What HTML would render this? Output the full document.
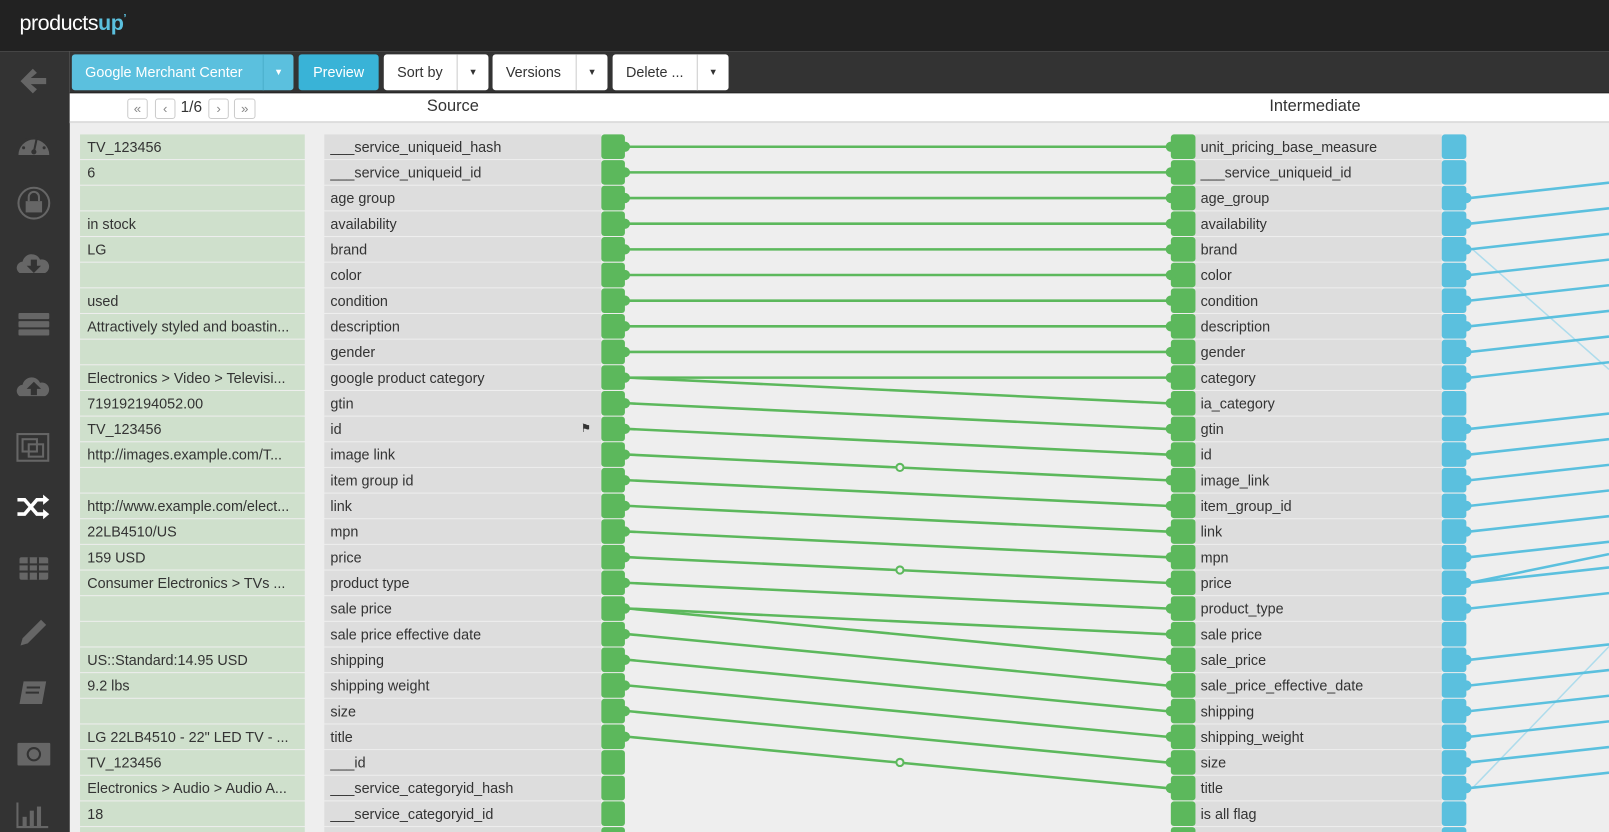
<!DOCTYPE html>
<html><head><meta charset="utf-8"><style>
*{margin:0;padding:0;box-sizing:border-box}
body{width:1609px;height:832px;overflow:hidden;background:#eee;font-family:"Liberation Sans",Arial,sans-serif}
#wrap{position:absolute;left:0;top:0;width:1568px;height:811px;transform:scale(1.02615);transform-origin:0 0;overflow:hidden;background:#eee}
#top{position:absolute;left:0;top:0;width:1568px;height:50px;background:#222}
#logo{position:absolute;left:19px;top:11px;color:#fff;font-size:21px;letter-spacing:-0.5px}
#logo span{color:#5bc0de;font-weight:bold}
#side{position:absolute;left:0;top:50px;width:68px;height:782px;background:#333}
#tb{position:absolute;left:68px;top:50px;width:1500px;height:41px;background:#333;border-bottom:1px solid #222}
.btn{position:absolute;top:53px;height:35px;border-radius:3px;font-size:14px;line-height:35px;color:#333;background:#fff}
#hdr{position:absolute;left:68px;top:91px;width:1500px;height:29px;background:#fff;border-bottom:2px solid #ddd}
.pg{position:absolute;top:96px;width:20px;height:20px;border:1px solid #ccc;border-radius:3px;font-size:13px;color:#888;text-align:center;line-height:18px;background:#fff}
.r{position:absolute;height:24px;font-size:14px;line-height:24px;color:#333;white-space:nowrap;overflow:hidden}
.v{left:78px;width:219px;background:#cfe0cc;padding-left:7px}
.s{left:316px;width:270px;background:#ddd;padding-left:6px}
.i{left:1164px;width:241px;background:#ddd;padding-left:6px}
</style></head><body><div id="wrap">
<div id="top"><div id="logo">products<span>up</span><sup style="color:#5bc0de;font-size:11px;font-weight:bold">&#x2019;</sup></div></div>
<div id="side">
<svg width="68" height="782" viewBox="0 50 68 782" fill="#666">
<path d="M20 79 L32 67 L36 71 L30 76 L45 76 L45 82 L30 82 L36 87 L32 91Z"/>
<path d="M18 151 A15 15 0 0 1 48 151 Z"/><path d="M33 148 L36 134" stroke="#333" stroke-width="2"/><circle cx="33" cy="148" r="2.5" fill="#333"/><circle cx="23" cy="144" r="1.5" fill="#333"/><circle cx="43" cy="144" r="1.5" fill="#333"/><circle cx="26" cy="136" r="1.5" fill="#333"/>
<circle cx="33" cy="198" r="15" fill="none" stroke="#666" stroke-width="2"/><rect x="25" y="196" width="16" height="11"/><path d="M28 196 v-4 a5 5 0 0 1 10 0 v4" fill="none" stroke="#666" stroke-width="2"/>
<path d="M19 266 a6 6 0 0 1 3-11 a9 9 0 0 1 17-2 a7 7 0 0 1 5 13Z"/><path d="M30 253 h6 v6 h4 l-7 7 l-7-7 h4Z" fill="#333"/>
<rect x="18" y="305" width="30" height="6" rx="1"/><rect x="18" y="313" width="30" height="6" rx="1"/><rect x="18" y="321" width="30" height="6" rx="1"/>
<path d="M19 386 a6 6 0 0 1 3-11 a9 9 0 0 1 17-2 a7 7 0 0 1 5 13Z"/><path d="M30 385 h6 v-6 h4 l-7-7 l-7 7 h4Z" fill="#333"/>
<rect x="17" y="423" width="30" height="26" fill="none" stroke="#666" stroke-width="2"/><rect x="22" y="428" width="14" height="12" fill="none" stroke="#666" stroke-width="2"/><rect x="28" y="433" width="14" height="12" fill="none" stroke="#666" stroke-width="2"/>
<path d="M17 487 h7 l12 14 h7 M17 501 h7 l12 -14 h7" fill="none" stroke="#fff" stroke-width="3.5"/><path d="M42 482 l6 5 l-6 5Z M42 496 l6 5 l-6 5Z" fill="#fff"/>
<rect x="19" y="543" width="28" height="22" rx="2"/><path d="M19 550 h28 M19 557 h28 M28 543 v22 M37 543 v22" stroke="#333" stroke-width="2"/>
<path d="M22 622 l18-18 l5 5 l-18 18 l-7 2Z"/>
<path d="M23 664 h22 l-4 22 h-22Z"/><path d="M26 670 h13 M25 675 h13" stroke="#333" stroke-width="2"/>
<rect x="17" y="724" width="32" height="22" rx="1"/><circle cx="33" cy="735" r="7" fill="#333"/><circle cx="33" cy="735" r="5"/>
<path d="M17 782 v24 h30" fill="none" stroke="#666" stroke-width="2"/><rect x="22" y="796" width="4" height="9"/><rect x="29" y="790" width="4" height="15"/><rect x="36" y="786" width="4" height="19"/>
</svg></div>
<div id="tb"></div>
<div class="btn" style="left:70px;width:216px;background:#5bc0de;color:#fff"><span style="padding-left:13px">Google Merchant Center</span><span style="position:absolute;left:186px;top:0;width:30px;height:35px;border-left:1px solid #4aaecb;text-align:center;font-size:9px">▼</span></div>
<div class="btn" style="left:291px;width:78px;background:#39b3d7;color:#fff;text-align:center">Preview</div>
<div class="btn" style="left:374px;width:102px"><span style="padding-left:13px">Sort by</span><span style="position:absolute;left:71px;width:31px;border-left:1px solid #ccc;text-align:center;font-size:9px">▼</span></div>
<div class="btn" style="left:480px;width:112px"><span style="padding-left:13px">Versions</span><span style="position:absolute;left:81px;width:31px;border-left:1px solid #ccc;text-align:center;font-size:9px">▼</span></div>
<div class="btn" style="left:597px;width:113px"><span style="padding-left:13px">Delete ...</span><span style="position:absolute;left:82px;width:31px;border-left:1px solid #ccc;text-align:center;font-size:9px">▼</span></div>
<div id="hdr"></div>
<div class="pg" style="left:124px">«</div><div class="pg" style="left:151px">‹</div>
<div style="position:absolute;left:176px;top:96px;font-size:15px;color:#333">1/6</div>
<div class="pg" style="left:203px">›</div><div class="pg" style="left:228px;width:21px">»</div>
<div style="position:absolute;left:416px;top:95px;font-size:16px;color:#333">Source</div>
<div style="position:absolute;left:1237px;top:95px;font-size:16px;color:#333">Intermediate</div>
<div id="rows"></div>
<svg id="lines" style="position:absolute;left:0;top:0" width="1568" height="811"></svg>
</div>
<script>
var V=["TV_123456","6","","in stock","LG","","used","Attractively styled and boastin...","","Electronics > Video > Televisi...","719192194052.00","TV_123456","http://images.example.com/T...","","http://www.example.com/elect...","22LB4510/US","159 USD","Consumer Electronics > TVs ...","","","US::Standard:14.95 USD","9.2 lbs","","LG 22LB4510 - 22\" LED TV - ...","TV_123456","Electronics > Audio > Audio A...","18",""];
var S=["___service_uniqueid_hash","___service_uniqueid_id","age group","availability","brand","color","condition","description","gender","google product category","gtin","id","image link","item group id","link","mpn","price","product type","sale price","sale price effective date","shipping","shipping weight","size","title","___id","___service_categoryid_hash","___service_categoryid_id",""];
var I=["unit_pricing_base_measure","___service_uniqueid_id","age_group","availability","brand","color","condition","description","gender","category","ia_category","gtin","id","image_link","item_group_id","link","mpn","price","product_type","sale price","sale_price","sale_price_effective_date","shipping","shipping_weight","size","title","is all flag",""];
var h="";
for(var k=0;k<28;k++){var t=131+25*k;
h+='<div class="r v" style="top:'+t+'px">'+V[k].replace(/</g,"&lt;").replace(/>/g,"&gt;")+'</div>';
h+='<div class="r s" style="top:'+t+'px">'+S[k]+(k==11?'<span style="position:absolute;left:250px;font-size:11px">&#9873;</span>':'')+'</div>';
h+='<div class="r i" style="top:'+t+'px">'+I[k]+'</div>';}
document.getElementById("rows").innerHTML=h;
var M=[[0,0],[1,1],[2,2],[3,3],[4,4],[5,5],[6,6],[7,7],[8,8],[9,9],[9,10],[10,11],[11,12],[12,13,1],[13,14],[14,15],[15,16],[16,17,1],[17,18],[18,19],[18,20],[19,21],[20,22],[21,23],[22,24],[23,25,1]];
var g="",srcK={},dstK={};
M.forEach(function(m){var y1=143+25*m[0],y2=143+25*m[1];srcK[m[0]]=1;dstK[m[1]]=1;
g+='<line x1="612" y1="'+y1+'" x2="1137" y2="'+y2+'" stroke="#5cb85c" stroke-width="2.5"/>';
if(m[2])g+='<circle cx="877" cy="'+(y1+y2)/2+'" r="3.5" fill="#eee" stroke="#5cb85c" stroke-width="2"/>';});
var blue=[2,3,4,5,6,7,8,9,11,12,13,14,15,16,17,18,20,21,22,23,24,25];
g+='<line x1="1435" y1="243" x2="1568" y2="360" stroke="#aedcec" stroke-width="1.5"/><line x1="1435" y1="768" x2="1568" y2="630" stroke="#aedcec" stroke-width="1.5"/>';
blue.forEach(function(k){var y=143+25*k;g+='<line x1="1432" y1="'+y+'" x2="1568" y2="'+(y-15)+'" stroke="#5bc0de" stroke-width="2.5"/>';});
g+='<line x1="1432" y1="568" x2="1568" y2="540" stroke="#5bc0de" stroke-width="2.5"/>';
for(var k=0;k<28;k++){var t=131+25*k,c=t+12;
g+='<rect x="586" y="'+t+'" width="23" height="24" rx="3" fill="#5cb85c"/>';
if(srcK[k])g+='<circle cx="609" cy="'+c+'" r="5" fill="#5cb85c"/>';
g+='<rect x="1141" y="'+t+'" width="24" height="24" rx="3" fill="#5cb85c"/>';
if(dstK[k])g+='<circle cx="1141" cy="'+c+'" r="5" fill="#5cb85c"/>';
g+='<rect x="1405" y="'+t+'" width="24" height="24" rx="3" fill="#5bc0de"/>';
if(blue.indexOf(k)>=0)g+='<circle cx="1429" cy="'+c+'" r="5" fill="#5bc0de"/>';}
document.getElementById("lines").innerHTML=g;
</script>
</body></html>
